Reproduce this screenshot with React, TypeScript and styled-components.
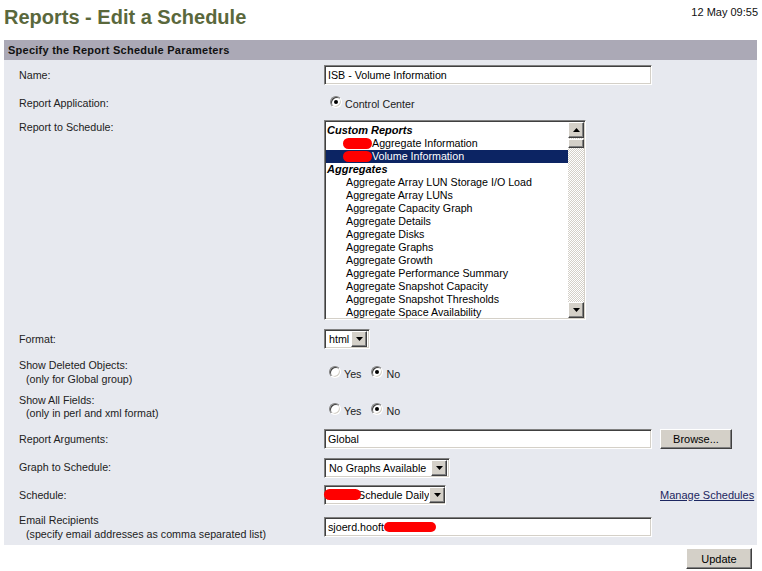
import React from 'react'
import styled, { createGlobalStyle, css } from 'styled-components'

const GlobalStyle = createGlobalStyle`
  html, body {
    margin: 0;
    padding: 0;
    background: #fff;
  }
  body {
    font-family: "Liberation Sans", Arial, sans-serif;
    font-size: 10.7px;
    color: #222;
  }
`

const inset = css`
  box-sizing: border-box;
  border: 1px solid;
  border-color: #808080 #fff #fff #808080;
  box-shadow: inset 1px 1px #404040, inset -1px -1px #d4d0c8;
`

const outset = css`
  box-sizing: border-box;
  background: #d4d0c8;
  border: 1px solid;
  border-color: #fff #404040 #404040 #fff;
  box-shadow: inset -1px -1px #808080;
`

const Page = styled('div')`
  width: 753px;
  padding: 0 5px 0 4px;
`

const TitleBar = styled('header')`
  height: 40px;
  display: flex;
  justify-content: space-between;
  align-items: flex-start;
`

const Title = styled('h1')`
  margin: 5px 0 0;
  font-size: 20px;
  line-height: 24px;
  font-weight: bold;
  color: #5a683c;
`

const Stamp = styled('span')`
  margin: 6px -1px 0 0;
  font-size: 11px;
  line-height: 13px;
  color: #111;
`

const Panel = styled('section')`
  background: #e7e9ef;
`

const PanelHeader = styled('h2')`
  margin: 0;
  height: 20px;
  line-height: 20px;
  padding-left: 4px;
  background: #aba9b6;
  font-size: 11px;
  letter-spacing: 0.25px;
  font-weight: bold;
  color: #111;
`

const Row = styled('div')<{ $h: number; $top?: boolean }>`
  display: grid;
  grid-template-columns: 305px 336px 1fr;
  padding-left: 15px;
  height: ${(p) => p.$h}px;
  align-items: ${(p) => (p.$top ? 'start' : 'center')};
`

const Label = styled('div')<{ $lh?: number; $pt?: number }>`
  line-height: ${(p) => p.$lh ?? 13}px;
  padding-top: ${(p) => p.$pt ?? 0}px;
`

const Hint = styled('div')`
  padding-left: 7px;
`

const Field = styled('div')<{ $w: number }>`
  ${inset};
  width: ${(p) => p.$w}px;
  height: 20px;
  background: #fff;
  padding: 0 3px;
  line-height: 18px;
  color: #000;
  white-space: nowrap;
  overflow: hidden;
  display: flex;
  align-items: center;
`

const Blot = styled('span')<{ $w: number; $h?: number }>`
  display: inline-block;
  flex: none;
  width: ${(p) => p.$w}px;
  height: ${(p) => p.$h ?? 11}px;
  border-radius: 6px;
  background: #f00;
`

const Combo = styled('div')<{ $w: number }>`
  ${inset};
  position: relative;
  width: ${(p) => p.$w}px;
  height: 20px;
  background: #fff;
  padding: 2px 2px 2px 4px;
  display: flex;
  align-items: center;
  justify-content: space-between;
  color: #000;
  white-space: nowrap;
`

const ComboText = styled('span')<{ $pl?: number }>`
  padding-left: ${(p) => p.$pl ?? 0}px;
  line-height: 16px;
`

const ArrowButton = styled('span')`
  ${outset};
  flex: none;
  width: 16px;
  height: 16px;
  display: flex;
  align-items: center;
  justify-content: center;
`

const ComboBlot = styled(Blot)`
  position: absolute;
  left: -1px;
  top: 3px;
`

const Arrow = ({ up }: { up?: boolean }) => (
  <svg width="7" height="4" viewBox="0 0 7 4">
    <path d={up ? 'M3.5 0L7 4H0z' : 'M0 0h7L3.5 4z'} fill="#000" />
  </svg>
)

const RadioGroup = styled('div')<{ $nudge?: number }>`
  display: flex;
  align-items: flex-end;
  gap: 10px;
  margin-top: ${(p) => p.$nudge ?? 0}px;
`

const RadioLabel = styled('label')<{ $pl: number }>`
  display: flex;
  align-items: flex-end;
  gap: 3px;
  padding-left: ${(p) => p.$pl}px;
  line-height: 13px;
  color: #222;
`

const RadioRing = styled('span')`
  ${inset};
  width: 12px;
  height: 12px;
  border-radius: 50%;
  background: #fff;
  display: flex;
  align-items: center;
  justify-content: center;
  margin-bottom: 3px;
`

const RadioDot = styled('span')`
  width: 4px;
  height: 4px;
  border-radius: 50%;
  background: #000;
`

const Radio = ({ text, on, pl = 0 }: { text: string; on?: boolean; pl?: number }) => (
  <RadioLabel $pl={pl}>
    <RadioRing>{on && <RadioDot />}</RadioRing>
    {text}
  </RadioLabel>
)

const ListBox = styled('div')`
  ${inset};
  margin-top: 4px;
  width: 262px;
  height: 200px;
  background: #fff;
  padding: 1px;
  display: flex;
`

const ListItems = styled('ul')`
  list-style: none;
  margin: 0;
  padding: 2px 0 0;
  flex: 1;
  overflow: hidden;
`

const ListItem = styled('li')<{ $group?: boolean; $selected?: boolean; $pl?: number }>`
  height: 13px;
  line-height: 13px;
  display: flex;
  align-items: center;
  white-space: nowrap;
  padding-left: ${(p) => p.$pl ?? (p.$group ? 1 : 20)}px;
  color: ${(p) => (p.$selected ? '#fff' : '#000')};
  background: ${(p) => (p.$selected ? '#0c2463' : 'transparent')};
  font-weight: ${(p) => (p.$group ? 'bold' : 'normal')};
  font-style: ${(p) => (p.$group ? 'italic' : 'normal')};
  font-size: ${(p) => (p.$group ? '11px' : 'inherit')};
`

const ScrollBar = styled('div')`
  width: 16px;
  display: flex;
  flex-direction: column;
  background-color: #fff;
  background-image: repeating-conic-gradient(#d4d0c8 0 25%, #fff 0 50%);
  background-size: 2px 2px;
`

const ScrollButton = styled(ArrowButton)``

const Thumb = styled('span')`
  ${outset};
  height: 9px;
  margin-top: 1px;
`

const Track = styled('div')`
  flex: 1;
`

const Button = styled('button')<{ $w: number; $h?: number }>`
  ${outset};
  width: ${(p) => p.$w}px;
  height: ${(p) => p.$h ?? 20}px;
  padding: 0;
  font-family: "Liberation Sans", Arial, sans-serif;
  font-size: 11px;
  color: #000;
`

const Link = styled('a')`
  color: #1c2660;
  font-size: 11px;
  text-decoration: underline;
  cursor: pointer;
`

const Footer = styled('div')`
  display: flex;
  justify-content: flex-end;
  padding: 3px 5px 0 0;
`

const reports: { text: string; group?: boolean; blot?: boolean; selected?: boolean }[] = [
  { text: 'Custom Reports', group: true },
  { text: 'Aggregate Information', blot: true },
  { text: 'Volume Information', blot: true, selected: true },
  { text: 'Aggregates', group: true },
  { text: 'Aggregate Array LUN Storage I/O Load' },
  { text: 'Aggregate Array LUNs' },
  { text: 'Aggregate Capacity Graph' },
  { text: 'Aggregate Details' },
  { text: 'Aggregate Disks' },
  { text: 'Aggregate Graphs' },
  { text: 'Aggregate Growth' },
  { text: 'Aggregate Performance Summary' },
  { text: 'Aggregate Snapshot Capacity' },
  { text: 'Aggregate Snapshot Thresholds' },
  { text: 'Aggregate Space Availability' }
]

const App = (): JSX.Element => {
  return (
    <Page>
      <GlobalStyle />
      <TitleBar>
        <Title>Reports - Edit a Schedule</Title>
        <Stamp>12 May 09:55</Stamp>
      </TitleBar>
      <Panel>
        <PanelHeader>Specify the Report Schedule Parameters</PanelHeader>

        <Row $h={30}>
          <Label>Name:</Label>
          <Field $w={328}>ISB - Volume Information</Field>
        </Row>

        <Row $h={26}>
          <Label>Report Application:</Label>
          <RadioGroup>
            <Radio text="Control Center" on pl={6} />
          </RadioGroup>
        </Row>

        <Row $h={208} $top>
          <Label $pt={5}>Report to Schedule:</Label>
          <ListBox>
            <ListItems>
              {reports.map((r) => (
                <ListItem key={r.text} $group={r.group} $selected={r.selected} $pl={r.blot ? 17 : undefined}>
                  {r.blot && <Blot $w={29} />}
                  {r.text}
                </ListItem>
              ))}
            </ListItems>
            <ScrollBar>
              <ScrollButton><Arrow up /></ScrollButton>
              <Thumb />
              <Track />
              <ScrollButton><Arrow /></ScrollButton>
            </ScrollBar>
          </ListBox>
        </Row>

        <Row $h={30}>
          <Label>Format:</Label>
          <Combo $w={46}>
            <ComboText>html</ComboText>
            <ArrowButton><Arrow /></ArrowButton>
          </Combo>
        </Row>

        <Row $h={36}>
          <Label $lh={14}>
            Show Deleted Objects:
            <Hint>(only for Global group)</Hint>
          </Label>
          <RadioGroup $nudge={3}>
            <Radio text="Yes" pl={5} />
            <Radio text="No" on />
          </RadioGroup>
        </Row>

        <Row $h={34}>
          <Label>
            Show All Fields:
            <Hint>(only in perl and xml format)</Hint>
          </Label>
          <RadioGroup $nudge={6}>
            <Radio text="Yes" pl={5} />
            <Radio text="No" on />
          </RadioGroup>
        </Row>

        <Row $h={30}>
          <Label>Report Arguments:</Label>
          <Field $w={328}>Global</Field>
          <Button $w={72}>Browse...</Button>
        </Row>

        <Row $h={27}>
          <Label>Graph to Schedule:</Label>
          <Combo $w={126}>
            <ComboText>No Graphs Available</ComboText>
            <ArrowButton><Arrow /></ArrowButton>
          </Combo>
        </Row>

        <Row $h={28}>
          <Label>Schedule:</Label>
          <Combo $w={122}>
            <ComboText $pl={29}>Schedule Daily</ComboText>
            <ArrowButton><Arrow /></ArrowButton>
            <ComboBlot $w={37} />
          </Combo>
          <Link>Manage Schedules</Link>
        </Row>

        <Row $h={36}>
          <Label $lh={14}>
            Email Recipients
            <Hint>(specify email addresses as comma separated list)</Hint>
          </Label>
          <Field $w={328}>
            sjoerd.hooft
            <Blot $w={52} $h={10} />
          </Field>
        </Row>
      </Panel>
      <Footer>
        <Button $w={66} $h={21}>Update</Button>
      </Footer>
    </Page>
  )
}

export default App
